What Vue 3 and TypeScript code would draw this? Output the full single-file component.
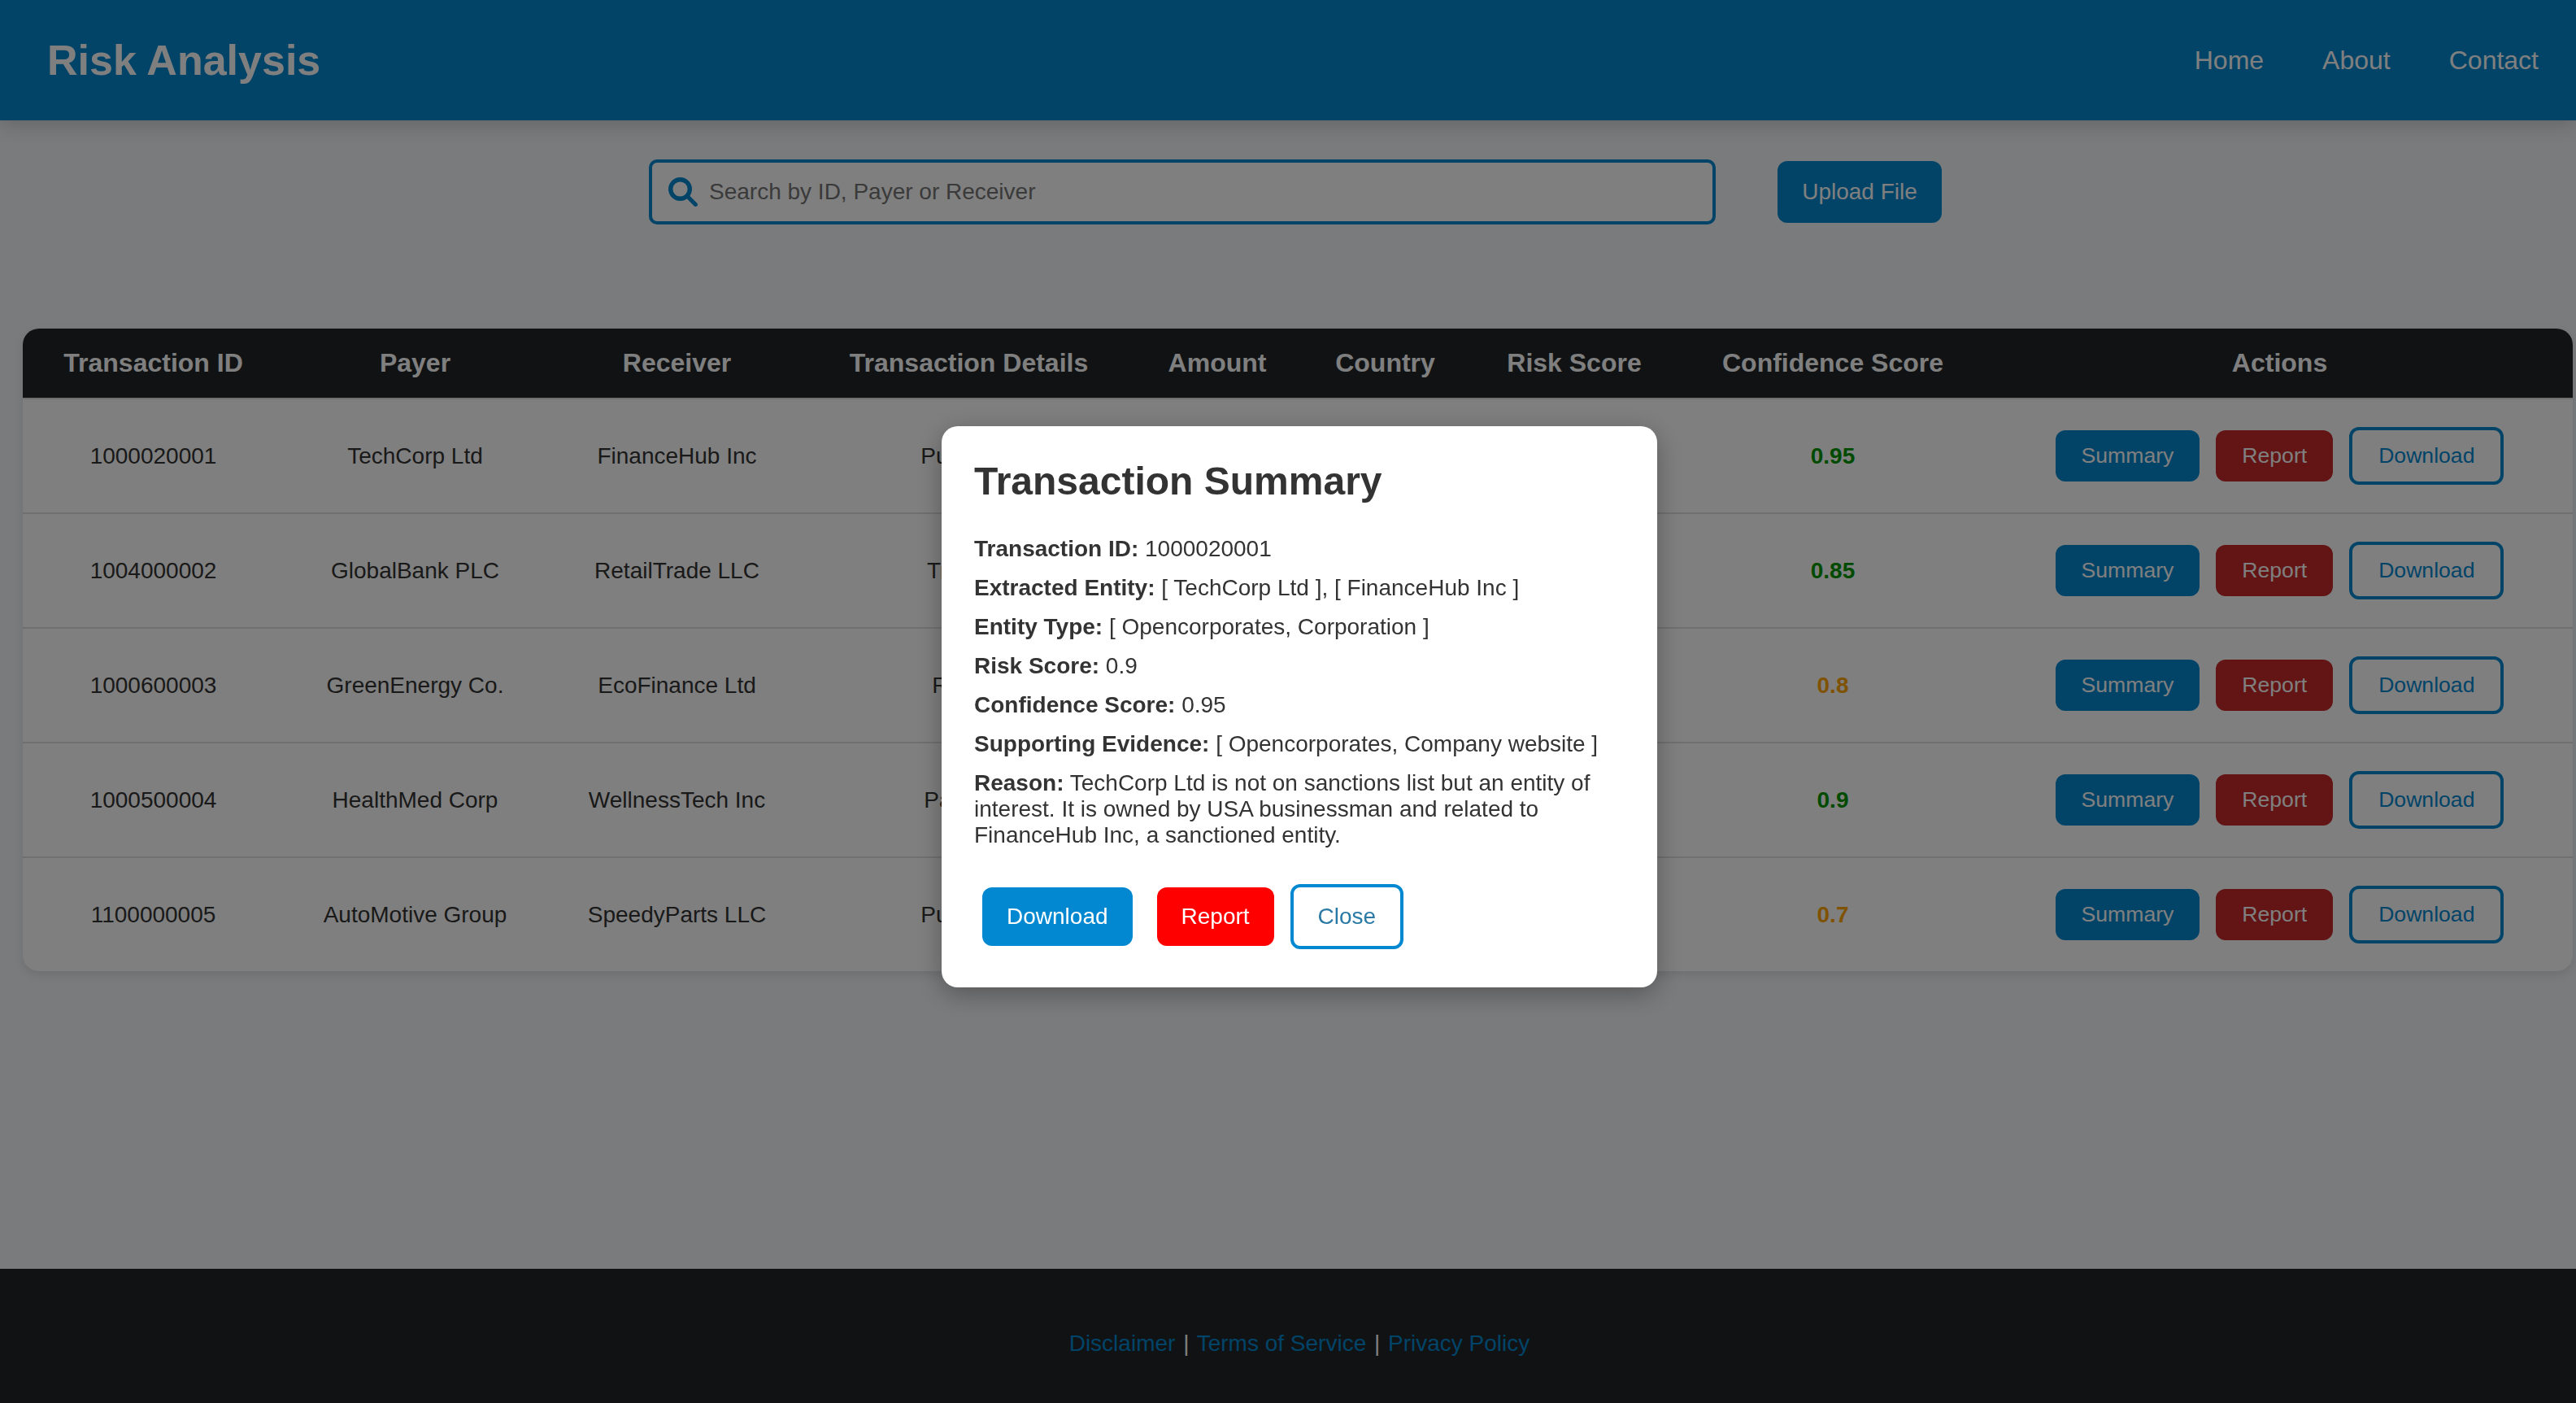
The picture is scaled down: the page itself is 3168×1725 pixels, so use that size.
<script setup lang="ts">
import { ref } from "vue";

interface Transaction {
  id: string;
  payer: string;
  receiver: string;
  details: string;
  confidence: string;
  level: string;
}

const columns = [
  "Transaction ID",
  "Payer",
  "Receiver",
  "Transaction Details",
  "Amount",
  "Country",
  "Risk Score",
  "Confidence Score",
  "Actions",
];

const rows: Transaction[] = [
  { id: "1000020001", payer: "TechCorp Ltd", receiver: "FinanceHub Inc", details: "Purchase", confidence: "0.95", level: "high" },
  { id: "1004000002", payer: "GlobalBank PLC", receiver: "RetailTrade LLC", details: "Transfer", confidence: "0.85", level: "high" },
  { id: "1000600003", payer: "GreenEnergy Co.", receiver: "EcoFinance Ltd", details: "Refund", confidence: "0.8", level: "mid" },
  { id: "1000500004", payer: "HealthMed Corp", receiver: "WellnessTech Inc", details: "Payment", confidence: "0.9", level: "high" },
  { id: "1100000005", payer: "AutoMotive Group", receiver: "SpeedyParts LLC", details: "Purchase", confidence: "0.7", level: "mid" },
];

const search = ref("");
const showSummary = ref(true);
</script>

<template>
  <div class="page">
    <header class="topbar">
      <h1 class="brand">Risk Analysis</h1>
      <nav class="nav">
        <a href="#">Home</a>
        <a href="#">About</a>
        <a href="#">Contact</a>
      </nav>
    </header>

    <main class="content">
      <div class="toolbar">
        <div class="searchBox">
          <svg class="searchIcon" viewBox="0 0 36 36">
            <circle cx="14.5" cy="14.5" r="11.8" fill="none" stroke="currentColor" stroke-width="5.4" />
            <line x1="23" y1="23" x2="33.400" y2="33.400" stroke="currentColor" stroke-width="5" stroke-linecap="round" />
          </svg>
          <input
            v-model="search"
            class="searchInput"
            type="text"
            placeholder="Search by ID, Payer or Receiver"
          />
        </div>
        <button class="btn primary upload">Upload File</button>
      </div>

      <table class="grid">
        <colgroup>
          <col class="c1" />
          <col class="c2" />
          <col class="c3" />
          <col class="c4" />
          <col class="c5" />
          <col class="c6" />
          <col class="c7" />
          <col class="c8" />
          <col />
        </colgroup>
        <thead>
          <tr>
            <th v-for="col in columns" :key="col">{{ col }}</th>
          </tr>
        </thead>
        <tbody>
          <tr v-for="row in rows" :key="row.id">
            <td>{{ row.id }}</td>
            <td>{{ row.payer }}</td>
            <td>{{ row.receiver }}</td>
            <td>{{ row.details }}</td>
            <td></td>
            <td></td>
            <td></td>
            <td class="score" :class="row.level">{{ row.confidence }}</td>
            <td>
              <div class="actions">
                <button class="btn primary small">Summary</button>
                <button class="btn danger small">Report</button>
                <button class="btn outline small">Download</button>
              </div>
            </td>
          </tr>
        </tbody>
      </table>
    </main>

    <footer class="footer">
      <a href="#">Disclaimer</a> <span class="sep">|</span> <a href="#">Terms of Service</a> <span class="sep">|</span> <a href="#">Privacy Policy</a>
    </footer>

    <div v-if="showSummary" class="overlay">
      <div class="modal">
        <h2>Transaction Summary</h2>
        <p><strong>Transaction ID:</strong> 1000020001</p>
        <p><strong>Extracted Entity:</strong> [ TechCorp Ltd ], [ FinanceHub Inc ]</p>
        <p><strong>Entity Type:</strong> [ Opencorporates, Corporation ]</p>
        <p><strong>Risk Score:</strong> 0.9</p>
        <p><strong>Confidence Score:</strong> 0.95</p>
        <p><strong>Supporting Evidence:</strong> [ Opencorporates, Company website ]</p>
        <p>
          <strong>Reason:</strong> TechCorp Ltd is not on sanctions list but an entity of
          interest. It is owned by USA businessman and related to FinanceHub Inc, a
          sanctioned entity.
        </p>
        <div class="modalActions">
          <button class="mbtn mDownload">Download</button>
          <button class="mbtn mReport">Report</button>
          <button class="mbtn mClose" @click="showSummary = false">Close</button>
        </div>
      </div>
    </div>
  </div>
</template>

<style>
html,
body {
  margin: 0;
  background: #f4f6f8;
}
</style>

<style scoped>
.page {
  min-height: 1725px;
  display: flex;
  flex-direction: column;
  font-family: "Liberation Sans", Arial, sans-serif;
  font-size: 28px;
  color: #333;
  background: #f4f6f8;
}

.topbar {
  height: 148px;
  padding: 0 46px 0 58px;
  display: flex;
  align-items: center;
  justify-content: space-between;
  background: #0288d1;
  box-shadow: 0 4px 24px rgba(0, 0, 0, 0.2);
}
.brand {
  margin: 0;
  font-size: 52px;
  font-weight: 700;
  color: #fff;
}
.nav {
  display: flex;
  gap: 72px;
}
.nav a {
  font-size: 32px;
  color: #fff;
  text-decoration: none;
}

.content {
  flex: 1;
  padding-top: 48px;
}
.toolbar {
  display: flex;
  align-items: center;
  justify-content: center;
  gap: 76px;
  padding-left: 18px;
}
.searchBox {
  width: 1312px;
  height: 80px;
  box-sizing: border-box;
  padding: 0 20px;
  display: flex;
  align-items: center;
  gap: 14px;
  background: #fff;
  border: 4px solid #0288d1;
  border-radius: 10px;
}
.searchIcon {
  width: 36px;
  height: 36px;
  color: #0288d1;
  flex: none;
}
.searchInput {
  flex: 1;
  border: none;
  outline: none;
  padding: 0;
  font-family: inherit;
  font-size: 28px;
  background: transparent;
}

.btn {
  font-family: inherit;
  border: none;
  border-radius: 12px;
  cursor: pointer;
}
.upload {
  width: 202px;
  height: 76px;
  padding: 0;
  font-size: 28px;
}
.small {
  font-size: 26.6px;
  padding: 16px 32px;
}
.primary {
  background: #0288d1;
  color: #fff;
}
.danger {
  background: #c62828;
  color: #fff;
}
.outline {
  background: #fff;
  color: #0288d1;
  border: 4px solid #0288d1;
}

.grid {
  width: 3136px;
  margin: 128px 4px 0 28px;
  table-layout: fixed;
  border-collapse: separate;
  border-spacing: 0;
  border-radius: 20px;
  overflow: hidden;
  background: #fff;
  box-shadow: 0 4px 12px rgba(0, 0, 0, 0.1);
}
.c1 { width: 321px; }
.c2 { width: 323px; }
.c3 { width: 321px; }
.c4 { width: 397px; }
.c5 { width: 214px; }
.c6 { width: 199px; }
.c7 { width: 266px; }
.c8 { width: 370px; }
.grid th {
  height: 85px;
  padding: 0;
  font-size: 32px;
  font-weight: 700;
  color: #fff;
  background: #212529;
}
.grid th:last-child {
  padding-left: 4px;
}
.grid td {
  height: 139px;
  padding: 0;
  text-align: center;
  border-top: 2px solid #e0e0e0;
}
.score {
  font-weight: 700;
}
.score.high {
  color: #009600;
}
.score.mid {
  color: #ffa500;
}
.actions {
  display: flex;
  align-items: center;
  justify-content: center;
  gap: 20px;
  padding-left: 4px;
}

.footer {
  height: 165px;
  box-sizing: border-box;
  padding: 76px 0 0 28px;
  text-align: center;
  color: #fff;
  background: #212529;
}
.footer a {
  color: #0288d1;
  text-decoration: none;
}
.sep {
  margin: 0 2px;
}

.overlay {
  position: fixed;
  inset: 0;
  padding: 13px 0 0 28px;
  display: flex;
  align-items: center;
  justify-content: center;
  background: rgba(0, 0, 0, 0.5);
}
.modal {
  width: 880px;
  height: 690px;
  box-sizing: border-box;
  padding: 40px;
  background: #fff;
  border-radius: 20px;
  box-shadow: 0 8px 32px rgba(0, 0, 0, 0.3);
}
.modal h2 {
  margin: 0 0 40px;
  font-size: 48px;
  font-weight: 700;
}
.modal p {
  margin: 0 0 16px;
}
.modalActions {
  margin-top: 44px;
  padding-left: 10px;
  display: flex;
  align-items: center;
}
.mbtn {
  font-family: inherit;
  font-size: 28px;
  padding: 20px 30px;
  border: none;
  border-radius: 12px;
  cursor: pointer;
}
.mDownload {
  background: #0288d1;
  color: #fff;
  margin-right: 30px;
}
.mReport {
  background: #ff0000;
  color: #fff;
  margin-right: 20px;
}
.mClose {
  background: #fff;
  color: #2a7aa5;
  border: 4px solid #0288d1;
}
</style>
